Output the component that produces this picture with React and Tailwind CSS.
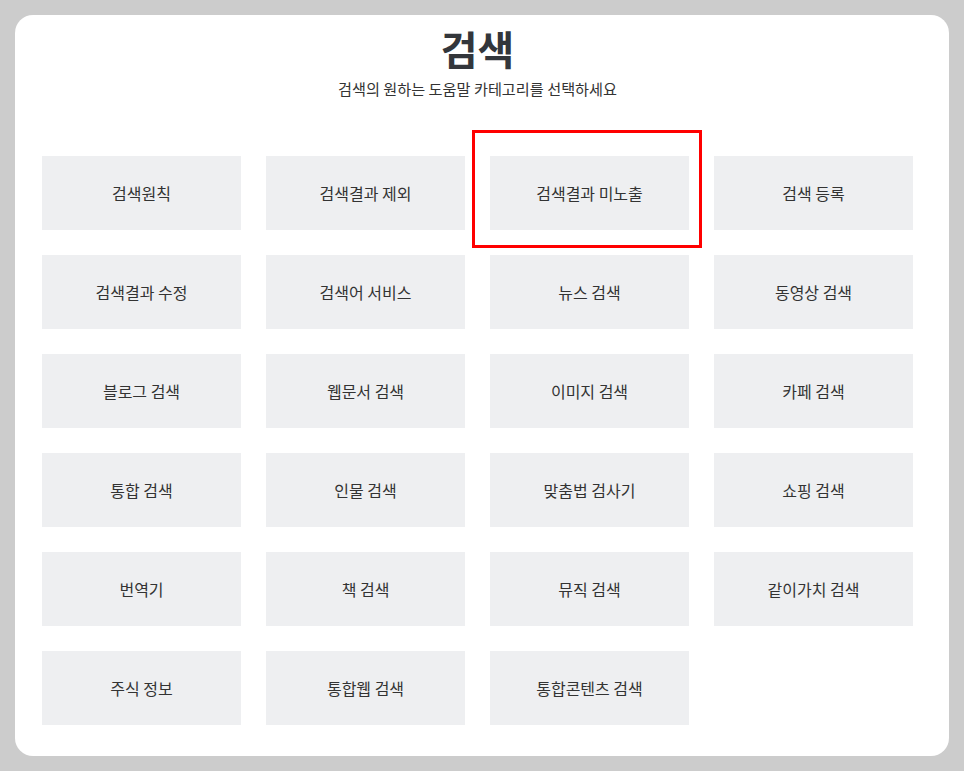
const items = [
  "검색원칙",
  "검색결과 제외",
  "검색결과 미노출",
  "검색 등록",
  "검색결과 수정",
  "검색어 서비스",
  "뉴스 검색",
  "동영상 검색",
  "블로그 검색",
  "웹문서 검색",
  "이미지 검색",
  "카페 검색",
  "통합 검색",
  "인물 검색",
  "맞춤법 검사기",
  "쇼핑 검색",
  "번역기",
  "책 검색",
  "뮤직 검색",
  "같이가치 검색",
  "주식 정보",
  "통합웹 검색",
  "통합콘텐츠 검색",
];

export default function App() {
  return (
    <div
      className="min-h-screen bg-[#cccccc] p-[15px]"
      style={{ fontFamily: '"Noto Sans CJK KR", "Noto Sans", sans-serif' }}
    >
      <div className="h-[741px] w-[934px] rounded-[18px] bg-white pl-[27px] pr-[36px] pt-[7px]">
        <div className="text-center">
          <h1 className="text-[40px] font-bold leading-[52px] text-[#33363b]">검색</h1>
          <p className="mt-[3px] text-[15.2px] leading-[22px] text-[#333333]">
            검색의 원하는 도움말 카테고리를 선택하세요
          </p>
        </div>
        <div className="mt-[57px] grid grid-cols-[repeat(4,199px)] gap-x-[25px] gap-y-[25px]">
          {items.map((label, idx) => (
            <div key={idx} className="relative">
              <div className="flex h-[74px] items-center justify-center bg-[#eeeff1] text-[16px] text-[#333333]">
                {label}
              </div>
              {idx === 2 && (
                <div className="pointer-events-none absolute -left-[18px] -top-[26px] h-[118px] w-[230px] border-[3px] border-[#ff0000]" />
              )}
            </div>
          ))}
        </div>
      </div>
    </div>
  );
}
